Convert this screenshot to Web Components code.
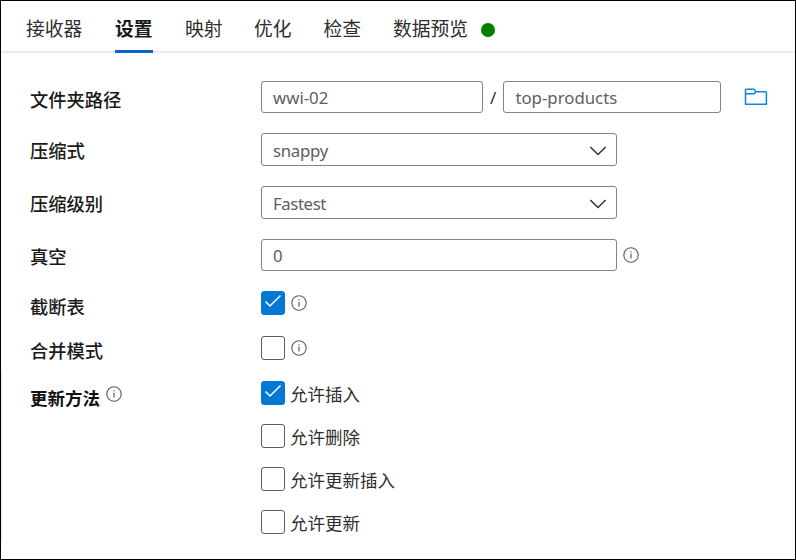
<!DOCTYPE html>
<html lang="zh-CN">
<head>
<meta charset="utf-8">
<title>设置</title>
<style>
html,body{margin:0;height:100%;background:#fff}
body{font-family:"Noto Sans","Noto Sans CJK SC",sans-serif;color:#1b1a19}
</style>
</head>
<body>
<sink-panel>
  <tab-bar slot="tabs">
    <tab-item style="--w:89px">接收器</tab-item>
    <tab-item style="--w:70px" active>设置</tab-item>
    <tab-item style="--w:69px">映射</tab-item>
    <tab-item style="--w:69.5px">优化</tab-item>
    <tab-item style="--w:69.5px">检查</tab-item>
    <tab-item style="--w:88px">数据预览</tab-item>
    <status-dot></status-dot>
  </tab-bar>
  <form-row label="文件夹路径" style="--h:32px;--gap:0px;--drop:6px">
    <text-box style="--w:222px;--pt:1px">wwi-02</text-box>
    <path-separator>/</path-separator>
    <text-box style="--w:218px;--pt:1px">top-products</text-box>
    <folder-icon></folder-icon>
  </form-row>
  <form-row label="压缩式" style="--h:33px;--gap:20px;--drop:3px"><select-box style="--pt:3px;--track:-.3px">snappy</select-box></form-row>
  <form-row label="压缩级别" style="--h:33px;--gap:20px;--drop:3px"><select-box style="--pt:3px;--track:-.4px">Fastest</select-box></form-row>
  <form-row label="真空" style="--h:32px;--gap:20px;--drop:4px"><text-box style="--w:356px;--pt:2px">0</text-box><info-icon></info-icon></form-row>
  <form-row label="截断表" style="--h:25px;--gap:19px;--drop:8px"><check-box checked></check-box><info-icon style="--up:1px"></info-icon></form-row>
  <form-row label="合并模式" style="--h:25px;--gap:20px;--drop:6px"><check-box></check-box><info-icon style="--up:0px"></info-icon></form-row>
  <form-row label="更新方法" strong info style="--h:25px;--gap:20px;--drop:11px"><check-box checked>允许插入</check-box></form-row>
  <form-row style="--h:25px;--gap:18.5px"><check-box>允许删除</check-box></form-row>
  <form-row style="--h:25px;--gap:18px"><check-box>允许更新插入</check-box></form-row>
  <form-row style="--h:25px;--gap:17.5px"><check-box>允许更新</check-box></form-row>
</sink-panel>
<script>
const define = (name, html) => customElements.define(name, class extends HTMLElement {
  constructor() {
    super();
    const t = document.createElement('template');
    t.innerHTML = typeof html === 'function' ? html(this) : html;
    this.attachShadow({ mode: 'open' }).append(t.content.cloneNode(true));
  }
});

define('sink-panel', `<style>
:host{display:flex;flex-direction:column;box-sizing:border-box;width:796px;height:560px;border:1px solid #000;background:linear-gradient(#e9e7e7,#e9e7e7) 0 369px/1px 172px no-repeat #fff;overflow:hidden}
main{display:flex;flex-direction:column;padding:28px 0 0 29px}
</style><slot name="tabs"></slot><main><slot></slot></main>`);

define('tab-bar', `<style>
:host{display:flex;box-sizing:border-box;height:52px;padding-left:25px;background:linear-gradient(#e6e6e6,#e6e6e6) 0 50px/100% 1.6px no-repeat}
</style><slot></slot>`);

define('tab-item', `<style>
:host{display:block;width:var(--w);flex:none}
span{display:inline-block;box-sizing:border-box;height:52px;line-height:56px;font-size:18.8px;white-space:nowrap;color:#302e2c;border-bottom:3px solid transparent}
:host([active]) span{font-weight:700;color:#1b1a19;border-color:#0b62cf}
</style><span><slot></slot></span>`);

define('status-dot', `<style>:host{display:block;width:14px;height:14px;margin-top:22px;border-radius:50%;background:#008000}</style>`);

define('form-row', el => `<style>
:host{display:grid;grid-template-columns:231px 1fr;grid-template-rows:100%;height:var(--h);margin-top:var(--gap);align-items:center;flex:none}
label{display:flex;font-size:18.3px;line-height:24px;font-weight:500;color:#1b1a19;white-space:nowrap;padding-top:var(--drop)}
:host([strong]) label{font-weight:700;font-size:17.5px;color:#111}
label info-icon{--left:6px;--up:0px}
div{display:flex;align-items:center;height:100%}
</style><label>${el.getAttribute('label') || ''}${el.hasAttribute('info') ? '<info-icon></info-icon>' : ''}</label><div><slot></slot></div>`);

const field = `display:flex;align-items:center;box-sizing:border-box;height:100%;border:1.5px solid #858483;border-radius:3px;padding:var(--pt) 0 0 11px;font-size:16.8px;line-height:24px;color:#605e5c;letter-spacing:var(--track,0);flex:none;`;
define('text-box', `<style>:host{${field}width:var(--w)}</style><slot></slot>`);
define('select-box', `<style>:host{${field}width:356px;justify-content:space-between;padding-right:9px}svg{margin-top:calc(2px - var(--pt))}</style>
<span><slot></slot></span><svg width="18" height="12" viewBox="0 0 18 12" fill="none" stroke="#323130" stroke-width="1.5"><path d="M1.3 2 9 9.5 16.7 2"/></svg>`);
define('path-separator', `<style>:host{display:block;width:20.4px;text-align:center;font-size:17px;line-height:24px;padding-top:2px;color:#323130}</style><slot></slot>`);
define('folder-icon', `<style>:host{display:block;margin-left:23px;height:18px}svg{display:block}</style>
<svg width="24" height="18" viewBox="0 0 24 18" fill="none" stroke="#0a84dc" stroke-width="1.5" stroke-linejoin="round"><path d="M1.5 16.2V2.2Q1.5 1.2 2.5 1.2H9.5Q10.4 1.2 10.8 2L11.7 3.7H21.4Q22.4 3.7 22.4 4.7V16.2ZM1.5 5.8H9.5Q10.4 5.8 10.9 5L11.7 3.7"/></svg>`);
define('info-icon', `<style>:host{display:block;flex:none;width:16px;height:16px;margin:var(--up,-1px) 0 0 var(--left,6px)}svg{display:block}</style>
<svg width="16" height="16" viewBox="0 0 16 16" fill="none" stroke="#5d5c5b"><circle cx="8" cy="8" r="7.2" stroke-width="1.1"/><path d="M8 6.7V11.5M8 4.3V5.5" stroke-width="1.2"/></svg>`);
define('check-box', el => `<style>
:host{display:flex;align-items:center;height:25px}
i{display:flex;align-items:center;justify-content:center;box-sizing:border-box;width:24px;height:24px;border:1.5px solid #605e5c;border-radius:3px;background:#fff}
svg{display:none}
:host([checked]) i{background:#0078d4;border-color:#0078d4}
:host([checked]) svg{display:block;margin-top:-3px}
span{font-size:17.5px;line-height:24px;padding:2px 0 0 5px;color:#302e2c;white-space:nowrap}
</style><i><svg width="18" height="14" viewBox="0 0 18 14" fill="none" stroke="#fff" stroke-width="1.5"><path d="M1.5 7.5 6 12 16.5 1.5"/></svg></i>${el.textContent.trim() ? '<span><slot></slot></span>' : ''}`);
</script>
</body>
</html>
